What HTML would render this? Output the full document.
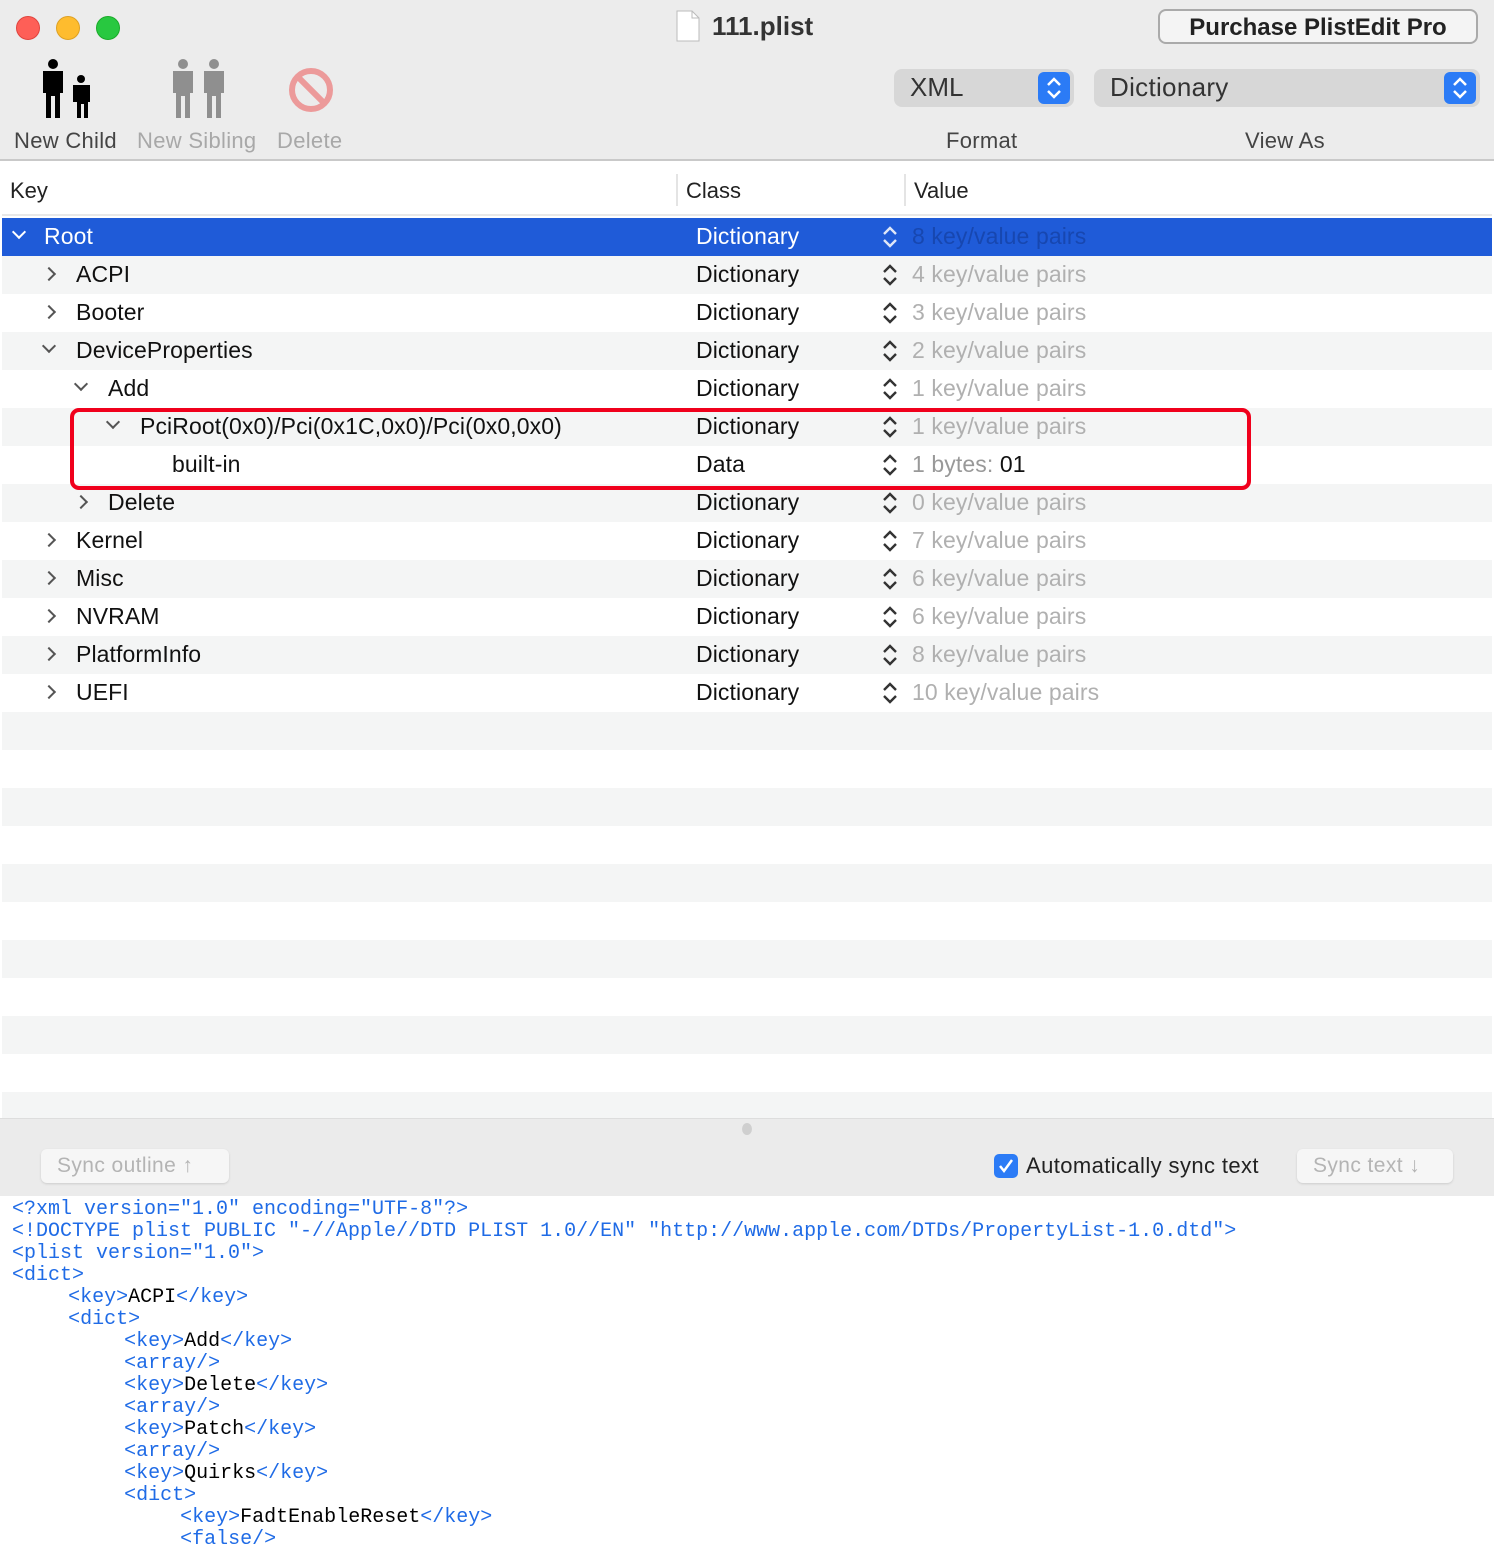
<!DOCTYPE html>
<html><head><meta charset="utf-8"><style>
*{margin:0;padding:0;box-sizing:border-box}
body{width:1494px;height:1540px;background:#fff;font-family:"Liberation Sans",sans-serif;position:relative;overflow:hidden}
.a{position:absolute}
.tb{left:0;top:0;width:1494px;height:161px;background:#ececec;border-bottom:2px solid #c9c9c9}
.row{position:absolute;left:2px;width:1490px;height:38px;font-size:23px;color:#111;letter-spacing:0.1px}
.g{background:#f4f5f5}
.row span{position:absolute;top:5px;white-space:nowrap}
.cls{left:694px}
.val{left:910px;color:#b0b0b0}
.chev{position:absolute;top:13px;width:10px;height:10px;border-right:2px solid #555;border-bottom:2px solid #555}
.r{transform:rotate(-45deg)}
.d{transform:rotate(45deg);top:9px}
.upd{position:absolute;left:880px;top:6px;width:16px;height:26px}
.code{position:absolute;left:12px;top:1199px;font-family:"Liberation Mono",monospace;font-size:20px;line-height:22px;color:#1f6be6;white-space:pre;tab-size:4.67}
.code b{font-weight:normal;color:#000}
</style></head><body>
<div class="a tb"></div>
<div class="a" style="left:16px;top:16px;width:24px;height:24px;border-radius:50%;background:#fe5f57;border:1px solid #e0443e"></div>
<div class="a" style="left:56px;top:16px;width:24px;height:24px;border-radius:50%;background:#febc2e;border:1px solid #dea123"></div>
<div class="a" style="left:96px;top:16px;width:24px;height:24px;border-radius:50%;background:#28c840;border:1px solid #1aab29"></div>
<svg class="a" style="left:676px;top:10px" width="24" height="32"><path d="M1 1H16L23 8V31H1Z" fill="#fff" stroke="#bbb"/><path d="M16 1V8H23" fill="none" stroke="#bbb"/></svg>
<div class="a" style="left:712px;top:11px;font-size:26px;font-weight:bold;color:#333">111.plist</div>
<div class="a" style="left:1158px;top:9px;width:320px;height:35px;border:2px solid #aaa;border-radius:8px;background:#f4f4f4;font-size:24px;font-weight:bold;color:#222;text-align:center;line-height:33px">Purchase PlistEdit Pro</div>
<svg class="a" style="left:38px;top:58px" width="56" height="62"><g fill="#000"><circle cx="15" cy="6" r="5"/><path d="M5 13h20v22h-3v25h-5v-22h-4v22h-5v-25h-3z"/><circle cx="43" cy="21" r="4"/><path d="M35 27h17v17h-2v16h-4v-14h-3v14h-4v-16h-4z"/></g></svg>
<svg class="a" style="left:170px;top:58px" width="60" height="62"><g fill="#8f8f8f"><circle cx="13" cy="6" r="5"/><path d="M3 13h20v22h-3v25h-5v-22h-4v22h-5v-25h-3z"/><circle cx="44" cy="6" r="5"/><path d="M34 13h20v22h-3v25h-5v-22h-4v22h-5v-25h-3z"/></g></svg>
<svg class="a" style="left:287px;top:66px" width="48" height="48"><circle cx="24" cy="24" r="19" fill="none" stroke="#ec9a9a" stroke-width="6"/><path d="M11 11L37 37" stroke="#ec9a9a" stroke-width="6"/></svg>
<div class="a" style="left:14px;top:128px;font-size:22px;color:#444;letter-spacing:0.3px">New Child</div>
<div class="a" style="left:137px;top:128px;font-size:22px;color:#a8a8a8;letter-spacing:0.3px">New Sibling</div>
<div class="a" style="left:277px;top:128px;font-size:22px;color:#a8a8a8;letter-spacing:0.3px">Delete</div>
<div class="a" style="left:894px;top:69px;width:180px;height:38px;background:#d7d7d7;border-radius:8px"></div>
<div class="a" style="left:910px;top:72px;font-size:26px;color:#333">XML</div>
<div class="a" style="left:1038px;top:72px;width:32px;height:32px;background:#2b7bf6;border-radius:6px"><svg width="32" height="32"><path d="M10 13l6-6 6 6M10 19l6 6 6-6" fill="none" stroke="#fff" stroke-width="2.5"/></svg></div>
<div class="a" style="left:1094px;top:69px;width:386px;height:38px;background:#d7d7d7;border-radius:8px"></div>
<div class="a" style="left:1110px;top:72px;font-size:26px;color:#333;letter-spacing:0.3px">Dictionary</div>
<div class="a" style="left:1444px;top:72px;width:32px;height:32px;background:#2b7bf6;border-radius:6px"><svg width="32" height="32"><path d="M10 13l6-6 6 6M10 19l6 6 6-6" fill="none" stroke="#fff" stroke-width="2.5"/></svg></div>
<div class="a" style="left:946px;top:128px;font-size:22px;color:#444;letter-spacing:0.3px">Format</div>
<div class="a" style="left:1245px;top:128px;font-size:22px;color:#444;letter-spacing:0.3px">View As</div>

<div class="a" style="left:10px;top:178px;font-size:22px;color:#222">Key</div>
<div class="a" style="left:676px;top:174px;width:2px;height:32px;background:#e4e4e4"></div>
<div class="a" style="left:686px;top:178px;font-size:22px;color:#222">Class</div>
<div class="a" style="left:904px;top:174px;width:2px;height:32px;background:#e4e4e4"></div>
<div class="a" style="left:914px;top:178px;font-size:22px;color:#222">Value</div>
<div class="a" style="left:2px;top:214px;width:1490px;height:2px;background:#e8e8e8"></div>

<div class="row" style="top:218px;background:#1f5bd8;color:#fff"><i class="chev d" style="left:12px;border-color:#fff"></i><span style="left:42px">Root</span><span class="cls">Dictionary</span><svg class="upd" viewBox="0 0 16 26"><path d="M2 10l6-6 6 6M2 16l6 6 6-6" fill="none" stroke="#dfe6f7" stroke-width="2.4"/></svg><span class="val" style="color:#1747b0">8 key/value pairs</span></div>
<div class="row g" style="top:256px"><i class="chev r" style="left:42px"></i><span style="left:74px">ACPI</span><span class="cls">Dictionary</span><svg class="upd" viewBox="0 0 16 26"><path d="M2 10l6-6 6 6M2 16l6 6 6-6" fill="none" stroke="#333" stroke-width="2.4"/></svg><span class="val">4 key/value pairs</span></div>
<div class="row" style="top:294px"><i class="chev r" style="left:42px"></i><span style="left:74px">Booter</span><span class="cls">Dictionary</span><svg class="upd" viewBox="0 0 16 26"><path d="M2 10l6-6 6 6M2 16l6 6 6-6" fill="none" stroke="#333" stroke-width="2.4"/></svg><span class="val">3 key/value pairs</span></div>
<div class="row g" style="top:332px"><i class="chev d" style="left:42px"></i><span style="left:74px">DeviceProperties</span><span class="cls">Dictionary</span><svg class="upd" viewBox="0 0 16 26"><path d="M2 10l6-6 6 6M2 16l6 6 6-6" fill="none" stroke="#333" stroke-width="2.4"/></svg><span class="val">2 key/value pairs</span></div>
<div class="row" style="top:370px"><i class="chev d" style="left:74px"></i><span style="left:106px">Add</span><span class="cls">Dictionary</span><svg class="upd" viewBox="0 0 16 26"><path d="M2 10l6-6 6 6M2 16l6 6 6-6" fill="none" stroke="#333" stroke-width="2.4"/></svg><span class="val">1 key/value pairs</span></div>
<div class="row g" style="top:408px"><i class="chev d" style="left:106px"></i><span style="left:138px">PciRoot(0x0)/Pci(0x1C,0x0)/Pci(0x0,0x0)</span><span class="cls">Dictionary</span><svg class="upd" viewBox="0 0 16 26"><path d="M2 10l6-6 6 6M2 16l6 6 6-6" fill="none" stroke="#333" stroke-width="2.4"/></svg><span class="val">1 key/value pairs</span></div>
<div class="row" style="top:446px"><span style="left:170px">built-in</span><span class="cls">Data</span><svg class="upd" viewBox="0 0 16 26"><path d="M2 10l6-6 6 6M2 16l6 6 6-6" fill="none" stroke="#333" stroke-width="2.4"/></svg><span class="val" style="color:#111"><span style="position:static;color:#999">1 bytes:</span> 01</span></div>
<div class="row g" style="top:484px"><i class="chev r" style="left:74px"></i><span style="left:106px">Delete</span><span class="cls">Dictionary</span><svg class="upd" viewBox="0 0 16 26"><path d="M2 10l6-6 6 6M2 16l6 6 6-6" fill="none" stroke="#333" stroke-width="2.4"/></svg><span class="val">0 key/value pairs</span></div>
<div class="row" style="top:522px"><i class="chev r" style="left:42px"></i><span style="left:74px">Kernel</span><span class="cls">Dictionary</span><svg class="upd" viewBox="0 0 16 26"><path d="M2 10l6-6 6 6M2 16l6 6 6-6" fill="none" stroke="#333" stroke-width="2.4"/></svg><span class="val">7 key/value pairs</span></div>
<div class="row g" style="top:560px"><i class="chev r" style="left:42px"></i><span style="left:74px">Misc</span><span class="cls">Dictionary</span><svg class="upd" viewBox="0 0 16 26"><path d="M2 10l6-6 6 6M2 16l6 6 6-6" fill="none" stroke="#333" stroke-width="2.4"/></svg><span class="val">6 key/value pairs</span></div>
<div class="row" style="top:598px"><i class="chev r" style="left:42px"></i><span style="left:74px">NVRAM</span><span class="cls">Dictionary</span><svg class="upd" viewBox="0 0 16 26"><path d="M2 10l6-6 6 6M2 16l6 6 6-6" fill="none" stroke="#333" stroke-width="2.4"/></svg><span class="val">6 key/value pairs</span></div>
<div class="row g" style="top:636px"><i class="chev r" style="left:42px"></i><span style="left:74px">PlatformInfo</span><span class="cls">Dictionary</span><svg class="upd" viewBox="0 0 16 26"><path d="M2 10l6-6 6 6M2 16l6 6 6-6" fill="none" stroke="#333" stroke-width="2.4"/></svg><span class="val">8 key/value pairs</span></div>
<div class="row" style="top:674px"><i class="chev r" style="left:42px"></i><span style="left:74px">UEFI</span><span class="cls">Dictionary</span><svg class="upd" viewBox="0 0 16 26"><path d="M2 10l6-6 6 6M2 16l6 6 6-6" fill="none" stroke="#333" stroke-width="2.4"/></svg><span class="val">10 key/value pairs</span></div>
<div class="row g" style="top:712px"></div><div class="row g" style="top:788px"></div><div class="row g" style="top:864px"></div><div class="row g" style="top:940px"></div><div class="row g" style="top:1016px"></div><div class="row g" style="top:1092px;height:26px"></div>
<div class="a" style="left:70px;top:408px;width:1181px;height:82px;border:4px solid #f0001c;border-radius:9px"></div>

<div class="a" style="left:0;top:1118px;width:1494px;height:78px;background:#ebebeb;border-top:1px solid #ddd"></div>
<div class="a" style="left:742px;top:1123px;width:10px;height:12px;border-radius:50%;background:#cfcfcf"></div>
<div class="a" style="left:41px;top:1149px;width:188px;height:34px;border-radius:6px;background:#f6f6f6;box-shadow:0 1px 2px #ccc;font-size:21px;color:#b4b4b4;line-height:34px;padding-left:16px;letter-spacing:0.4px">Sync outline ↑</div>
<div class="a" style="left:994px;top:1154px;width:24px;height:24px;border-radius:5px;background:#2b7bf6"><svg width="24" height="24"><path d="M6 12l4 5 8-11" fill="none" stroke="#fff" stroke-width="2.5"/></svg></div>
<div class="a" style="left:1026px;top:1153px;font-size:22px;color:#222;letter-spacing:0.4px">Automatically sync text</div>
<div class="a" style="left:1297px;top:1149px;width:156px;height:34px;border-radius:6px;background:#f6f6f6;box-shadow:0 1px 2px #ccc;font-size:21px;color:#b4b4b4;line-height:34px;padding-left:16px;letter-spacing:0.4px">Sync text ↓</div>
<div class="code">&lt;?xml version="1.0" encoding="UTF-8"?&gt;
&lt;!DOCTYPE plist PUBLIC "-//Apple//DTD PLIST 1.0//EN" "http://www.apple.com/DTDs/PropertyList-1.0.dtd"&gt;
&lt;plist version="1.0"&gt;
&lt;dict&gt;
	&lt;key&gt;<b>ACPI</b>&lt;/key&gt;
	&lt;dict&gt;
		&lt;key&gt;<b>Add</b>&lt;/key&gt;
		&lt;array/&gt;
		&lt;key&gt;<b>Delete</b>&lt;/key&gt;
		&lt;array/&gt;
		&lt;key&gt;<b>Patch</b>&lt;/key&gt;
		&lt;array/&gt;
		&lt;key&gt;<b>Quirks</b>&lt;/key&gt;
		&lt;dict&gt;
			&lt;key&gt;<b>FadtEnableReset</b>&lt;/key&gt;
			&lt;false/&gt;</div>
</body></html>
